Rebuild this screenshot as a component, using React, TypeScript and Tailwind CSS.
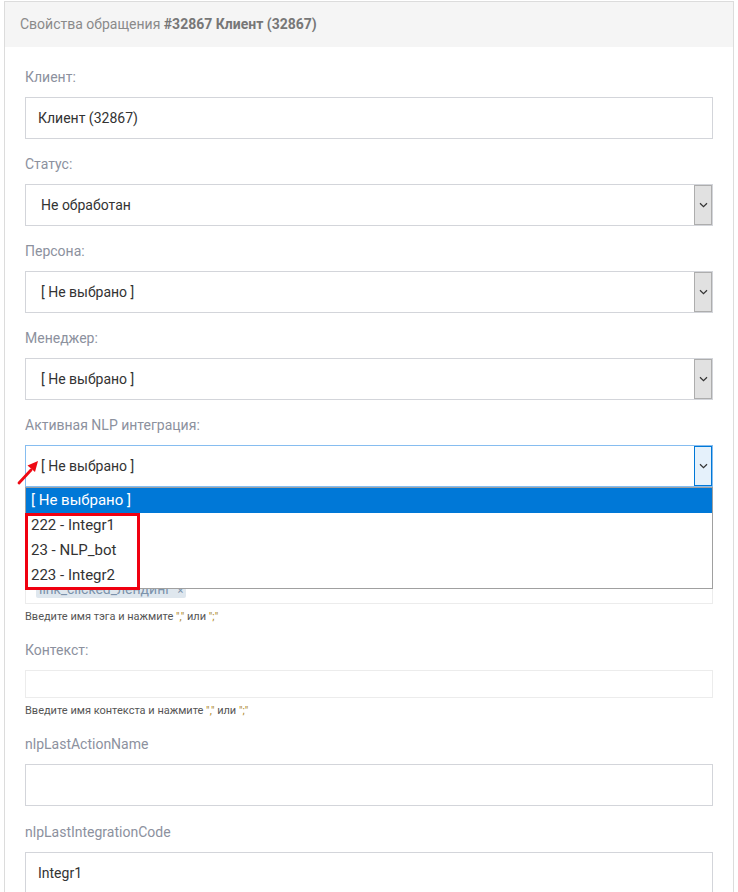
import React from 'react';

const font = { fontFamily: 'Roboto, "Noto Sans", sans-serif' };

function Label({ children }: { children: React.ReactNode }) {
  return <div className="h-[20px] leading-[20px] text-[14px] text-[#8c919e] mb-[10px]">{children}</div>;
}

function Chevron({ className = '' }: { className?: string }) {
  return (
    <svg width="9" height="6" viewBox="0 0 9 6" className={className}>
      <path d="M1 1.2 L4.5 4.6 L8 1.2" fill="none" stroke="#333" strokeWidth="1.2" />
    </svg>
  );
}

function Select({ value, focused = false }: { value: string; focused?: boolean }) {
  return (
    <div
      className={`h-[42px] flex items-stretch bg-white border ${
        focused ? 'border-[#86bdf0]' : 'border-[#d3d5da]'
      }`}
    >
      <div className="flex-1 flex items-center pl-[15px] text-[14px] text-[#333]">{value}</div>
      <div
        className={`w-[18px] flex items-center justify-center border ${
          focused ? 'bg-[#e5f1fb] border-[#0078d7]' : 'bg-[#e1e1e1] border-[#adadad]'
        }`}
      >
        <Chevron />
      </div>
    </div>
  );
}

export default function App() {
  return (
    <div className="pl-[4px] pt-[1px] bg-white min-h-[892px]" style={font}>
      <div className="w-[730px] border border-[#dcdcdc] border-b-0 bg-white">
        {/* Header */}
        <div className="h-[45px] bg-[#f5f5f5] px-[15px] flex items-center text-[14px] text-[#8a8a8a]">
          Свойства обращения&nbsp;<span className="font-bold text-[#777]">#32867 Клиент (32867)</span>
        </div>

        <div className="relative px-[20px] pt-[20px]">
          <div className="mb-[15px]">
            <Label>Клиент:</Label>
            <div className="h-[42px] border border-[#d3d5da] flex items-center pl-[12px] text-[14px] text-[#333]">
              Клиент (32867)
            </div>
          </div>

          <div className="mb-[15px]">
            <Label>Статус:</Label>
            <Select value="Не обработан" />
          </div>

          <div className="mb-[15px]">
            <Label>Персона:</Label>
            <Select value="[ Не выбрано ]" />
          </div>

          <div className="mb-[15px]">
            <Label>Менеджер:</Label>
            <Select value="[ Не выбрано ]" />
          </div>

          <div className="relative mb-[15px]">
            <Label>Активная NLP интеграция:</Label>
            <Select value="[ Не выбрано ]" focused />

            {/* open dropdown list */}
            <div className="absolute left-0 right-0 top-[72px] z-10 h-[102px] bg-white border border-[#a0a0a0] text-[15px] text-[#333]">
              <div className="h-[25px] bg-[#0078d7] text-white flex items-center pl-[5px]">[ Не выбрано ]</div>
              <div className="h-[25px] flex items-center pl-[5px]">222 - Integr1</div>
              <div className="h-[25px] flex items-center pl-[5px]">23 - NLP_bot</div>
              <div className="h-[25px] flex items-center pl-[5px]">223 - Integr2</div>
            </div>
            <div className="absolute left-0 top-[98px] z-20 w-[115px] h-[77px] border-[3px] border-[#f00010]" />

            {/* red pointer arrow */}
            <svg className="absolute left-[-8px] top-[42px] z-20" width="28" height="30" viewBox="0 0 28 30">
              <path d="M2 26 L14 13" stroke="#ee0a14" strokeWidth="2.8" strokeLinecap="round" />
              <path d="M21 4 L18 15 L10.5 8.5 Z" fill="#ee0a14" />
            </svg>
          </div>

          {/* tags (mostly hidden behind dropdown) */}
          <div className="mb-[5px]">
            <Label>Теги:</Label>
            <div className="h-[72px] border border-[#ececec] flex items-end pl-[10px] pb-[5px]">
              <span className="h-[17px] leading-[17px] px-[3px] bg-[#dfe7ee] rounded-[2px] text-[14px] text-[#7b92ab]">
                link_clicked_лендинг <span className="ml-[3px] text-[11px]">×</span>
              </span>
            </div>
          </div>
          <div className="text-[11px] leading-[15px] text-[#555] mb-[16px]">
            Введите имя тэга и нажмите <span className="text-[#b08a2c]">","</span> или <span className="text-[#b08a2c]">";"</span>
          </div>

          <div className="mb-[5px]">
            <Label>Контекст:</Label>
            <div className="h-[28px] border border-[#ececec]" />
          </div>
          <div className="text-[11px] leading-[15px] text-[#555] mb-[16px]">
            Введите имя контекста и нажмите <span className="text-[#b08a2c]">","</span> или <span className="text-[#b08a2c]">";"</span>
          </div>

          <div className="mb-[16px]">
            <Label>nlpLastActionName</Label>
            <div className="h-[42px] border border-[#d3d5da]" />
          </div>

          <div>
            <Label>nlpLastIntegrationCode</Label>
            <div className="h-[42px] border border-[#d3d5da] flex items-center pl-[12px] text-[14px] text-[#333]">
              Integr1
            </div>
          </div>
        </div>
      </div>
    </div>
  );
}
